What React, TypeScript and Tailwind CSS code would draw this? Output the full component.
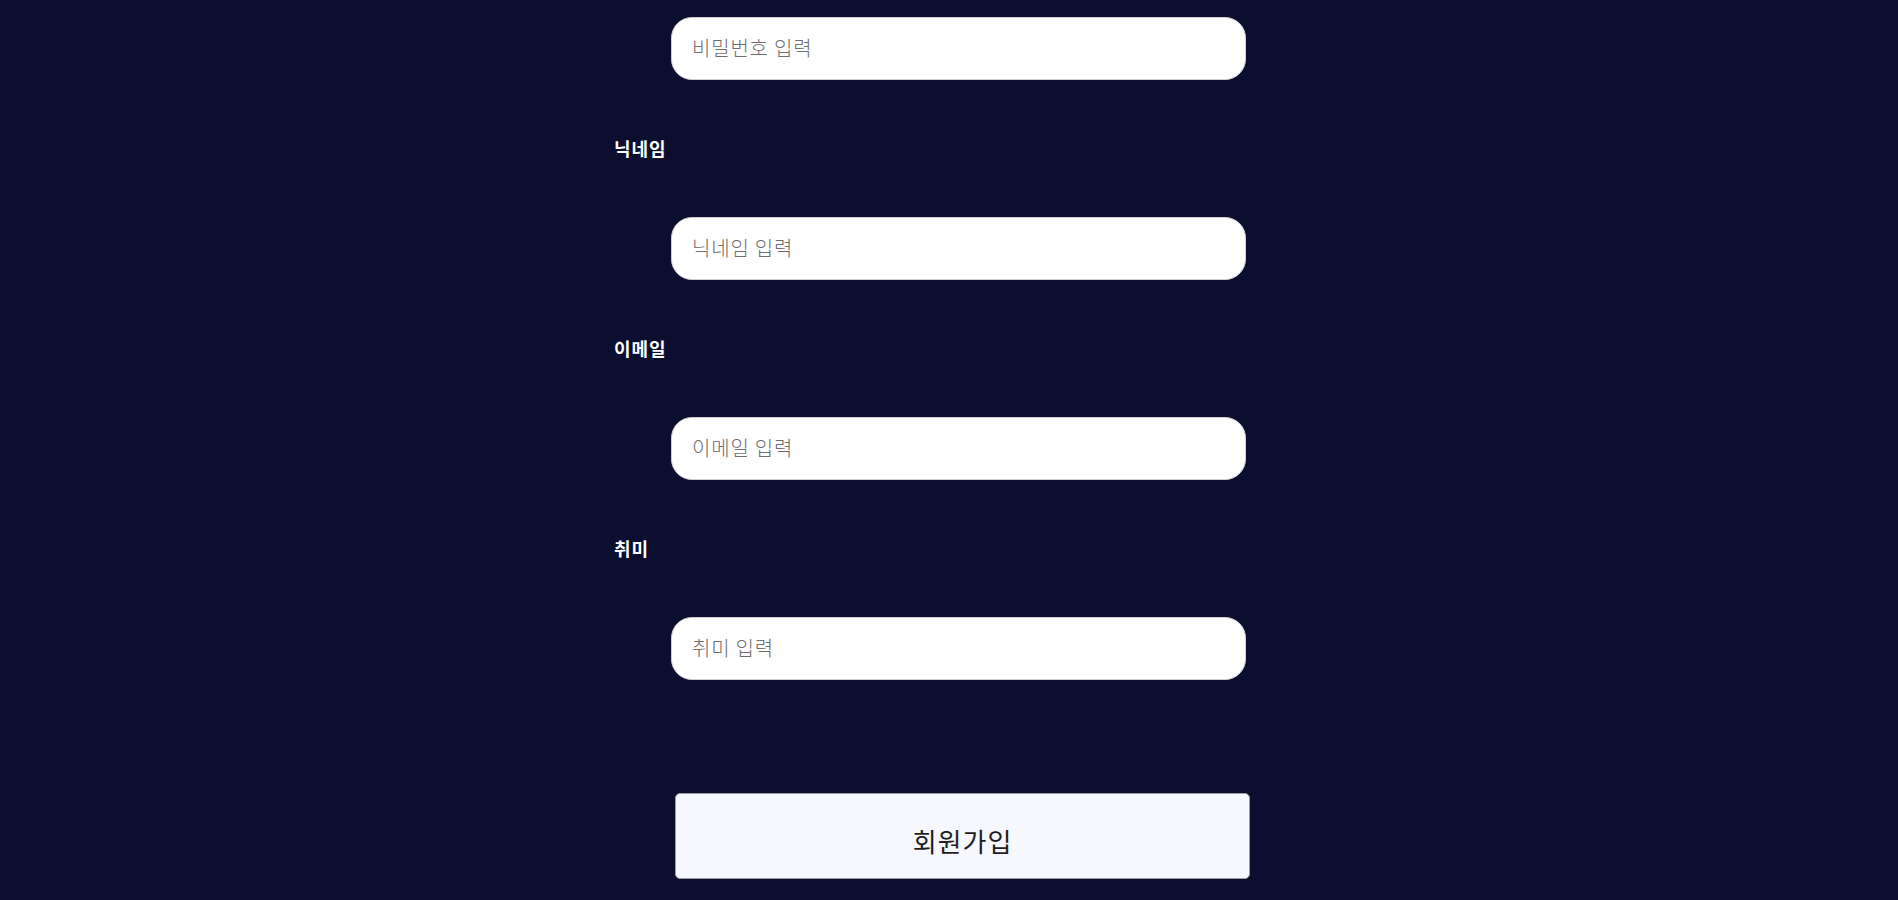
import { useId } from "react";

const fields = [
  { name: "nickname", label: "닉네임", placeholder: "닉네임 입력", type: "text" },
  { name: "email", label: "이메일", placeholder: "이메일 입력", type: "email" },
  { name: "hobby", label: "취미", placeholder: "취미 입력", type: "text" },
] as const;

const inputClass =
  "ml-[57px] block h-[63px] w-[575px] rounded-[21px] border border-[#d0d0d0] bg-white px-5 pb-[3px] text-[20px] font-light tracking-[0.8px] text-[#222] outline-none placeholder:text-[#6e6e6e]";

function Field({
  name,
  label,
  placeholder,
  type,
}: {
  name: string;
  label: string;
  placeholder: string;
  type: string;
}) {
  const id = useId();

  return (
    <div className="mt-[57px]">
      <label
        htmlFor={id}
        className="block h-[22px] text-[18px] font-bold leading-[22px] tracking-[1px] text-white"
      >
        {label}
      </label>
      <input
        id={id}
        name={name}
        type={type}
        placeholder={placeholder}
        className={`mt-[58px] ${inputClass}`}
      />
    </div>
  );
}

export default function App() {
  return (
    <div
      className="min-h-screen bg-[#0b0e2e]"
      style={{ fontFamily: '"Noto Sans CJK KR", "Noto Sans", sans-serif' }}
    >
      <form
        className="mx-auto w-[670px] pt-[17px] pb-[21px]"
        onSubmit={(e) => e.preventDefault()}
      >
        {/* 비밀번호 필드는 스크롤 위쪽에서 라벨이 잘린 상태 */}
        <input
          name="password"
          type="password"
          placeholder="비밀번호 입력"
          className={inputClass}
        />

        {fields.map((f) => (
          <Field key={f.name} {...f} />
        ))}

        <button
          type="submit"
          className="mt-[113px] ml-[61px] flex h-[86px] w-[575px] items-center justify-center rounded-[5px] border border-[#9c9ca4] bg-[#f7f8fd] pt-[8px] text-[26px] tracking-[1px] text-[#1e1e1e]"
        >
          회원가입
        </button>
      </form>
    </div>
  );
}
